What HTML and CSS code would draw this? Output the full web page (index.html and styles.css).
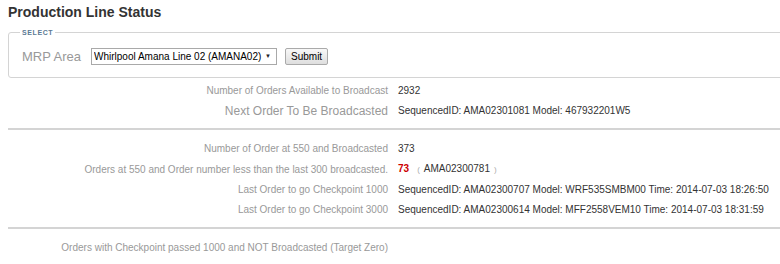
FILE: index.html
```html
<!DOCTYPE html>
<html lang="en">
<head>
  <meta charset="UTF-8">
  <title>Production Line Status</title>
  <link rel="stylesheet" href="styles.css">
</head>
<body>

<div class="page">
  <h2 class="page-title">Production Line Status</h2>

  <!-- Select MRP area -->
  <fieldset class="select-box">
    <legend>SELECT</legend>
    <form class="select-form" onsubmit="return false">
      <label for="mrpArea">MRP Area</label>
      <div class="select-wrap">
        <select id="mrpArea" name="mrpArea">
          <option>Whirlpool Amana Line 02 (AMANA02)</option>
        </select>
        <span class="select-arrow">&#9660;</span>
      </div>
      <button type="submit" class="submit-btn">Submit</button>
    </form>
  </fieldset>

  <div class="status-grid">
    <div class="label">Number of Orders Available to Broadcast</div>
    <div class="value">2932</div>
    <div class="label big">Next Order To Be Broadcasted</div>
    <div class="value">SequencedID: AMA02301081 Model: 467932201W5</div>
  </div>

  <hr class="divider">

  <div class="status-grid">
    <div class="label">Number of Order at 550 and Broadcasted</div>
    <div class="value">373</div>
    <div class="label">Orders at 550 and Order number less than the last 300 broadcasted.</div>
    <div class="value"><span class="alert">73</span><span class="paren">(</span>AMA02300781<span class="paren">)</span></div>
    <div class="label">Last Order to go Checkpoint 1000</div>
    <div class="value">SequencedID: AMA02300707 Model: WRF535SMBM00 Time: 2014-07-03 18:26:50</div>
    <div class="label">Last Order to go Checkpoint 3000</div>
    <div class="value">SequencedID: AMA02300614 Model: MFF2558VEM10 Time: 2014-07-03 18:31:59</div>
  </div>

  <hr class="divider">

  <div class="status-grid">
    <div class="label">Orders with Checkpoint passed 1000 and NOT Broadcasted (Target Zero)</div>
    <div class="value"></div>
  </div>
</div>

</body>
</html>
```

FILE: styles.css
```css
body {
  margin: 0;
  padding: 0 0 0 8px;
  font-family: "Liberation Sans", Arial, sans-serif;
  font-size: 10px;
  color: #333;
  background-color: #fff;
  overflow: hidden;
}
.page {
  width: 790px;
}
.page-title {
  font-size: 14px;
  font-weight: bold;
  color: #333;
  margin: 3px 0 8px 0;
  line-height: 18px;
}
.select-box {
  border: 1px solid #d4d4d4;
  border-radius: 3px;
  margin: 0;
  padding: 12px 13px 12px 13px;
}
.select-box legend {
  font-size: 7px;
  font-weight: bold;
  letter-spacing: 0.6px;
  color: #5b7a94;
  padding: 0 2px;
  margin-left: -2px;
}
.select-form {
  display: flex;
  align-items: center;
  gap: 10px;
}
.select-form label {
  font-size: 13px;
  color: #999;
}
.select-wrap {
  position: relative;
}
.select-form select {
  appearance: none;
  -webkit-appearance: none;
  font-family: "Liberation Sans", Arial, sans-serif;
  font-size: 10px;
  color: #000;
  height: 17px;
  width: 186px;
  border: 1px solid #a9a9a9;
  border-radius: 0;
  padding: 0 2px;
  background: #fff;
  display: block;
}
.select-arrow {
  position: absolute;
  right: 6px;
  top: 5px;
  font-size: 6px;
  color: #222;
  pointer-events: none;
}
.submit-btn {
  font-family: "Liberation Sans", Arial, sans-serif;
  font-size: 10px;
  color: #000;
  height: 17px;
  padding: 0 5px;
  margin-left: -2px;
  border: 1px solid #aaa;
  border-radius: 2px;
  background: linear-gradient(#f8f8f8, #dedede);
}
.status-grid {
  display: grid;
  grid-template-columns: 380px 1fr;
  column-gap: 10px;
  padding: 3px 0 0 0;
  align-items: center;
}
.label {
  text-align: right;
  color: #999;
  line-height: 20px;
  white-space: nowrap;
}
.label.big {
  font-size: 12px;
}
.value {
  color: #333;
  line-height: 20px;
  white-space: nowrap;
}
.alert {
  color: #c00;
  font-weight: bold;
}
.paren {
  color: #aaa;
  font-size: 8px;
  margin: 0 4px 0 8px;
}
.paren + .paren {
  margin: 0 0 0 4px;
}
.divider {
  border: none;
  border-top: 2px solid #d4d4d4;
  margin: 7px 0 6px 0;
}
```
